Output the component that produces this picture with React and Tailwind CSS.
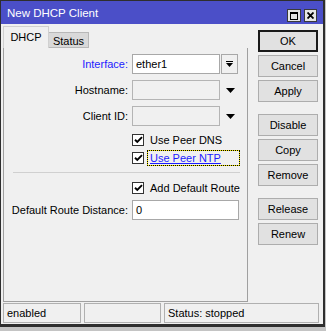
import React from "react";

function Check() {
  return (
    <span className="w-[12px] h-[12px] border border-[#333333] bg-white flex items-center justify-center shrink-0">
      <svg width="9" height="8" viewBox="0 0 9 8">
        <path d="M1 3.8 L3.3 6 L8 1.2" stroke="#000" strokeWidth="1.9" fill="none" />
      </svg>
    </span>
  );
}

function Tri() {
  return (
    <svg width="9" height="5" viewBox="0 0 9 5">
      <path d="M0 0 H9 L4.5 5 Z" fill="#000" />
    </svg>
  );
}

function Btn({ children, def }) {
  return (
    <div
      className={
        "h-[22px] w-[60px] flex items-center justify-center bg-[#e1e1e1] " +
        (def ? "border-2 border-[#1a1a1a]" : "border border-[#adadad]")
      }
    >
      {children}
    </div>
  );
}

export default function App() {
  return (
    <div className="w-[326px] h-[331px] bg-[#c4c4c4] font-['Liberation_Sans',Arial,sans-serif] text-[11px] text-black leading-none">
      <div className="w-[325px] h-[327px] bg-[#f0f0f0] border-l border-t border-r-2 border-b-[3px] border-[#2e2e2e] flex flex-col">
        {/* title bar */}
        <div className="h-[23px] bg-[#4b4fc8] flex items-center pl-[6px] pr-[6px] shrink-0">
          <span className="text-white text-[11.5px] mt-[3px]">New DHCP Client</span>
          <div className="ml-auto flex gap-[3px] mt-[6px]">
            <div className="w-[14px] h-[13px] bg-[#e6e6e6] border border-[#3a3a3a] flex items-center justify-center">
              <div className="w-[8px] h-[8px] border border-black border-t-2" />
            </div>
            <div className="w-[13px] h-[13px] bg-[#e6e6e6] border border-[#3a3a3a] flex items-center justify-center">
              <svg width="7" height="7" viewBox="0 0 7 7">
                <path d="M0.5 0.5 L6.5 6.5 M6.5 0.5 L0.5 6.5" stroke="#000" strokeWidth="1.8" />
              </svg>
            </div>
          </div>
        </div>

        {/* body */}
        <div className="h-[278px] flex shrink-0">
          {/* left */}
          <div className="ml-[2px] w-[245px] flex flex-col pt-[2px]">
            <div className="h-[22px] flex items-end shrink-0">
              <div className="h-[22px] w-[46px] bg-[#f0f0f0] border-t border-l border-r border-[#d0d0d0] flex items-center justify-center text-[11px] pb-[1px]">
                DHCP
              </div>
              <div className="h-[16px] w-[40px] bg-[#d9d9d9] border-t border-r border-b border-[#b8b8b8] flex items-center justify-center pt-[3px]">
                Status
              </div>
            </div>
            <div className="flex-1 border-l border-r border-b border-[#a0a0a0] flex flex-col">
              {/* Interface */}
              <div className="flex items-center mt-[6px] h-[20px]">
                <span className="w-[124px] text-right text-[#1c1cff]">Interface:</span>
                <div className="ml-[4px] w-[88px] h-[20px] bg-white border border-[#a8a8a8] flex items-center pl-[3px]">
                  ether1
                </div>
                <div className="ml-[1px] w-[17px] h-[20px] border border-[#a8a8a8] bg-[#f0f0f0] flex flex-col items-center justify-center gap-[1px]">
                  <div className="w-[7px] h-[1px] bg-black" />
                  <svg width="7" height="4" viewBox="0 0 7 4">
                    <path d="M0 0 H7 L3.5 4 Z" fill="#000" />
                  </svg>
                </div>
              </div>
              {/* Hostname */}
              <div className="flex items-center mt-[6px] h-[20px]">
                <span className="w-[124px] text-right">Hostname:</span>
                <div className="ml-[4px] w-[88px] h-[20px] border border-[#b4b4b4] bg-[#f0f0f0]" />
                <div className="ml-[6px] flex items-center">
                  <Tri />
                </div>
              </div>
              {/* Client ID */}
              <div className="flex items-center mt-[6px] h-[20px]">
                <span className="w-[124px] text-right">Client ID:</span>
                <div className="ml-[4px] w-[88px] h-[20px] border border-[#b4b4b4] bg-[#f0f0f0]" />
                <div className="ml-[6px] flex items-center">
                  <Tri />
                </div>
              </div>
              {/* checkboxes */}
              <div className="flex items-center mt-[8px] h-[12px] pl-[128px]">
                <Check />
                <span className="ml-[6px]">Use Peer DNS</span>
              </div>
              <div className="flex items-center mt-[4px] h-[16px] pl-[128px]">
                <Check />
                <div className="ml-[3px] h-[16px] w-[93px] border border-dotted border-black bg-[#f2e400]">
                  <div className="w-full h-full bg-[#f0f0f0] flex items-center pl-[2px]">
                    <span className="text-[#1c1cff] underline">Use Peer NTP</span>
                  </div>
                </div>
              </div>
              {/* separator */}
              <div className="mt-[6px] ml-[9px] w-[227px] h-[1px] bg-[#d0d0d0]" />
              {/* add default route */}
              <div className="flex items-center mt-[9px] h-[12px] pl-[128px]">
                <Check />
                <span className="ml-[6px]">Add Default Route</span>
              </div>
              {/* distance */}
              <div className="flex items-center mt-[6px] h-[20px]">
                <span className="w-[124px] text-right">Default Route Distance:</span>
                <div className="ml-[4px] w-[107px] h-[20px] bg-white border border-[#a8a8a8] flex items-center pl-[3px]">
                  0
                </div>
              </div>
            </div>
          </div>
          {/* right buttons */}
          <div className="ml-[10px] pt-[6px] flex flex-col">
            <div className="flex flex-col gap-[3px]">
              <Btn def>OK</Btn>
              <Btn>Cancel</Btn>
              <Btn>Apply</Btn>
            </div>
            <div className="flex flex-col gap-[3px] mt-[12px]">
              <Btn>Disable</Btn>
              <Btn>Copy</Btn>
              <Btn>Remove</Btn>
            </div>
            <div className="flex flex-col gap-[3px] mt-[12px]">
              <Btn>Release</Btn>
              <Btn>Renew</Btn>
            </div>
          </div>
        </div>

        {/* status bar */}
        <div className="mt-[1px] ml-[2px] h-[20px] flex gap-[3px]">
          <div className="w-[78px] h-[20px] border border-[#b0b0b0] flex items-center pl-[3px]">enabled</div>
          <div className="w-[77px] h-[20px] border border-[#b0b0b0]" />
          <div className="w-[155px] h-[20px] border border-[#b0b0b0] flex items-center pl-[3px]">Status: stopped</div>
        </div>
      </div>
    </div>
  );
}
